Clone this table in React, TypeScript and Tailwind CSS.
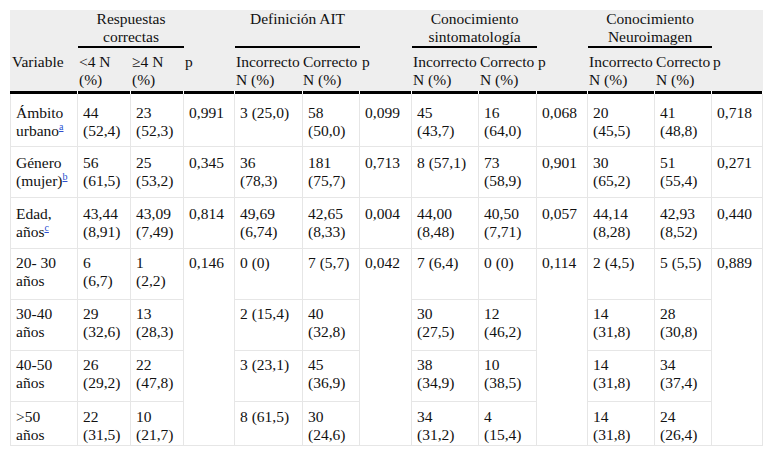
import React from 'react';

type Row = {
  label: React.ReactNode;
  cells: (string | null)[];
  pad: string;
};

const Sup = ({ children }: { children: string }) => (
  <span className="relative -top-[6px] text-[10px] leading-[0] text-[#2a4fd0] underline">{children}</span>
);

const rows: Row[] = [
  {
    label: (
      <>
        Ámbito urbano<Sup>a</Sup>
      </>
    ),
    cells: ['44 (52,4)', '23 (52,3)', '0,991', '3 (25,0)', '58 (50,0)', '0,099', '45 (43,7)', '16 (64,0)', '0,068', '20 (45,5)', '41 (48,8)', '0,718'],
    pad: 'pt-[10px] pb-[6px]',
  },
  {
    label: (
      <>
        Género (mujer)<Sup>b</Sup>
      </>
    ),
    cells: ['56 (61,5)', '25 (53,2)', '0,345', '36 (78,3)', '181 (75,7)', '0,713', '8 (57,1)', '73 (58,9)', '0,901', '30 (65,2)', '51 (55,4)', '0,271'],
    pad: 'pt-[7px] pb-[7px]',
  },
  {
    label: (
      <>
        Edad, años<Sup>c</Sup>
      </>
    ),
    cells: ['43,44 (8,91)', '43,09 (7,49)', '0,814', '49,69 (6,74)', '42,65 (8,33)', '0,004', '44,00 (8,48)', '40,50 (7,71)', '0,057', '44,14 (8,28)', '42,93 (8,52)', '0,440'],
    pad: 'pt-[7px] pb-[7px]',
  },
  {
    label: '20- 30 años',
    cells: ['6 (6,7)', '1 (2,2)', '0,146', '0 (0)', '7 (5,7)', '0,042', '7 (6,4)', '0 (0)', '0,114', '2 (4,5)', '5 (5,5)', '0,889'],
    pad: 'pt-[5px] pb-[9px]',
  },
  {
    label: '30-40 años',
    cells: ['29 (32,6)', '13 (28,3)', null, '2 (15,4)', '40 (32,8)', null, '30 (27,5)', '12 (46,2)', null, '14 (31,8)', '28 (30,8)', null],
    pad: 'pt-[5px] pb-[9px]',
  },
  {
    label: '40-50 años',
    cells: ['26 (29,2)', '22 (47,8)', null, '3 (23,1)', '45 (36,9)', null, '38 (34,9)', '10 (38,5)', null, '14 (31,8)', '34 (37,4)', null],
    pad: 'pt-[5px] pb-[9px]',
  },
  {
    label: '>50 años',
    cells: ['22 (31,5)', '10 (21,7)', null, '8 (61,5)', '30 (24,6)', null, '34 (31,2)', '4 (15,4)', null, '14 (31,8)', '24 (26,4)', null],
    pad: 'pt-[6px] pb-[1px]',
  },
];

const font = "[font-family:'Liberation_Serif','Times_New_Roman',serif] text-[15.5px] leading-[18px] text-[#111]";
const td = `${font} align-top text-left font-normal pl-[5px] pr-[8px] border-r border-b border-[#e6e6e6]`;
const th = `${font} align-top font-normal whitespace-nowrap bg-[#eeeeee] px-[1px]`;
const thL = `${th} text-left pt-[5px] pb-[2px]`;
const thG = `${th} text-center border-b-2 border-black`;
const rule = 'h-[3px] p-0 bg-black border-r border-r-white text-[0px] leading-[0]';

export default function App() {
  return (
    <div className={`min-h-screen bg-white p-[10px] ${font}`}>
      <table className={`table-fixed border-separate border-spacing-0 w-[753px] ${font}`}>
        <colgroup>
          <col className="w-[68px]" />
          <col className="w-[53px]" />
          <col className="w-[53px]" />
          <col className="w-[51px]" />
          <col className="w-[68px]" />
          <col className="w-[57px]" />
          <col className="w-[52px]" />
          <col className="w-[67px]" />
          <col className="w-[58px]" />
          <col className="w-[51px]" />
          <col className="w-[67px]" />
          <col className="w-[57px]" />
          <col className="w-[51px]" />
        </colgroup>
        <thead>
          <tr>
            <th className={th}></th>
            <th colSpan={2} className={thG}>
              Respuestas
              <br />
              correctas
            </th>
            <th className={th}></th>
            <th colSpan={2} className={thG}>
              Definición AIT
              <br />
              &nbsp;
            </th>
            <th className={th}></th>
            <th colSpan={2} className={thG}>
              Conocimiento
              <br />
              sintomatología
            </th>
            <th className={th}></th>
            <th colSpan={2} className={thG}>
              Conocimiento
              <br />
              Neuroimagen
            </th>
            <th className={th}></th>
          </tr>
          <tr>
            <th className={`${thL} pl-[2px]`}>Variable</th>
            <th className={thL}>
              &lt;4 N
              <br />
              (%)
            </th>
            <th className={thL}>
              ≥4 N
              <br />
              (%)
            </th>
            <th className={thL}>p</th>
            <th className={thL}>
              Incorrecto
              <br />
              N (%)
            </th>
            <th className={`${thL} pl-0`}>
              Correcto
              <br />
              N (%)
            </th>
            <th className={`${thL} pl-[2px]`}>p</th>
            <th className={thL}>
              Incorrecto
              <br />
              N (%)
            </th>
            <th className={thL}>
              Correcto
              <br />
              N (%)
            </th>
            <th className={thL}>p</th>
            <th className={thL}>
              Incorrecto
              <br />
              N (%)
            </th>
            <th className={thL}>
              Correcto
              <br />
              N (%)
            </th>
            <th className={thL}>p</th>
          </tr>
          <tr>
            {Array.from({ length: 13 }).map((_, i) => (
              <td key={i} className={rule}></td>
            ))}
          </tr>
        </thead>
        <tbody>
          {rows.map((r, ri) => (
            <tr key={ri}>
              <td className={`${td} ${r.pad} border-l`}>{r.label}</td>
              {r.cells.map((c, ci) => {
                if (c === null) return null;
                const isP = ci % 3 === 2;
                const span = isP && ri === 3 ? 4 : 1;
                return (
                  <td key={ci} rowSpan={span} className={`${td} ${r.pad}`}>
                    {c}
                  </td>
                );
              })}
            </tr>
          ))}
        </tbody>
      </table>
    </div>
  );
}
